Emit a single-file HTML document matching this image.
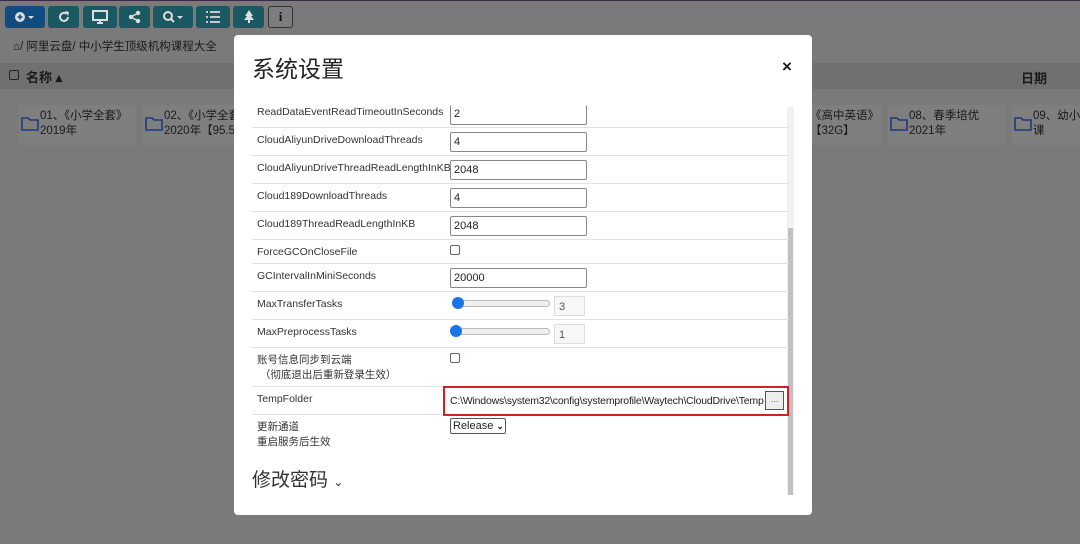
<!DOCTYPE html>
<html><head><meta charset="utf-8">
<style>
*{box-sizing:border-box;margin:0;padding:0}
body{width:1080px;height:544px;overflow:hidden;background:#7a7a7a;font-family:"Liberation Sans","Noto Sans CJK SC",sans-serif;position:relative;color:#1a1a1a}
.a{position:absolute;white-space:nowrap}
.btn{position:absolute;top:6px;height:22px;width:34px;background:#1a5862;border-radius:3px}
.btn svg{position:absolute;left:9px;top:4px}
.tile{position:absolute;top:105px;width:117px;height:40px;background:#7f7f7f;font-size:11.5px;color:#1a1a1a;line-height:15px;padding:4px 0 0 21px;white-space:nowrap;overflow:hidden}
.tile svg{position:absolute;left:2px;top:12px}
.modal{position:absolute;left:234px;top:35px;width:578px;height:480px;background:#fff;border-radius:4px}
.lbl{position:absolute;left:23px;font-size:10.5px;color:#333;white-space:nowrap}
.row{position:absolute;left:18px;width:537px;border-bottom:1px solid #e2e2e2}
.inp{position:absolute;left:216px;width:137px;height:20px;border:1px solid #888;border-radius:2px;font-size:11px;padding:4px 3px;line-height:11px;color:#222}
.cb{position:absolute;left:216px;width:10px;height:10px;border:1px solid #666;border-radius:2px}
.sl{position:absolute;left:218px;width:98px;height:7px;border:1px solid #bbb;border-radius:4px;background:#efefef}
.knob{position:absolute;width:12px;height:12px;border-radius:50%;background:#1a73e8}
.num{position:absolute;left:320px;width:31px;height:20px;border:1px solid #ddd;background:#f7f7f7;font-size:11px;padding:4px;color:#555}
</style></head><body>
<div class="a" style="left:0;top:0;width:1080px;height:1px;background:#3a2a4a"></div>
<div class="btn" style="left:5px;width:40px;background:#114c80"><svg width="22" height="14"><circle cx="6" cy="7" r="5" fill="#ddd"/><path d="M3.5 7h5M6 4.5v5" stroke="#114c80" stroke-width="1.6"/><path d="M14 6l3 3 3-3z" fill="#ddd"/></svg></div>
<div class="btn" style="left:48px;width:31px"><svg width="14" height="14"><path d="M11 7a4 4 0 1 1-1.5-3.2" stroke="#ddd" stroke-width="2" fill="none"/><path d="M8 1l4 1-1 4z" fill="#ddd"/></svg></div>
<div class="btn" style="left:83px"><svg width="16" height="14"><rect x="1" y="1" width="14" height="9" fill="none" stroke="#ddd" stroke-width="2"/><path d="M5 13h6M8 10v3" stroke="#ddd" stroke-width="2"/></svg></div>
<div class="btn" style="left:119px;width:31px"><svg width="14" height="14"><circle cx="10" cy="3" r="2.2" fill="#ddd"/><circle cx="3" cy="7" r="2.2" fill="#ddd"/><circle cx="10" cy="11" r="2.2" fill="#ddd"/><path d="M10 3L3 7l7 4" stroke="#ddd" stroke-width="1.4" fill="none"/></svg></div>
<div class="btn" style="left:153px;width:40px"><svg width="24" height="14"><circle cx="6" cy="6" r="4" fill="none" stroke="#ddd" stroke-width="2"/><path d="M9 9l3 3" stroke="#ddd" stroke-width="2"/><path d="M15 6l3 3 3-3z" fill="#ddd"/></svg></div>
<div class="btn" style="left:196px"><svg width="16" height="14"><path d="M1 2h2M1 7h2M1 12h2M5 2h10M5 7h10M5 12h10" stroke="#ddd" stroke-width="1.8"/></svg></div>
<div class="btn" style="left:233px;width:31px"><svg width="14" height="14"><path d="M7 0L11 6H9L12 10H8v3H6v-3H2L5 6H3z" fill="#ddd"/></svg></div>
<div class="a" style="left:268px;top:6px;width:25px;height:22px;border:1px solid #333;border-radius:3px;background:#7d7d7d;font:bold 13px 'Liberation Serif',serif;text-align:center;line-height:20px;color:#111">i</div>
<div class="a" style="left:13px;top:38px;font-size:11.5px;color:#1a1a1a"><b>&#8962;</b>/ 阿里云盘/ 中小学生顶级机构课程大全</div>
<div class="a" style="left:0;top:63px;width:1080px;height:26px;background:#707070"></div>
<div class="a" style="left:9px;top:70px;width:10px;height:10px;border:1px solid #222;border-radius:2px"></div>
<div class="a" style="left:26px;top:67px;font-size:13px;font-weight:bold">名称 ▴</div>
<div class="a" style="left:1021px;top:68px;font-size:13px;font-weight:bold">日期</div>
<div class="tile" style="left:19px"><svg width="18" height="14"><path d="M1 1h6l2 2h8v10H1z" fill="none" stroke="#1c3a7a" stroke-width="1.6"/></svg>01、《小学全套》<br>2019年</div>
<div class="tile" style="left:143px"><svg width="18" height="14"><path d="M1 1h6l2 2h8v10H1z" fill="none" stroke="#1c3a7a" stroke-width="1.6"/></svg>02、《小学全套<br>2020年【95.5G</div>
<div class="tile" style="left:764px;padding-left:46px">《高中英语》<br>【32G】</div>
<div class="tile" style="left:888px"><svg width="18" height="14"><path d="M1 1h6l2 2h8v10H1z" fill="none" stroke="#1c3a7a" stroke-width="1.6"/></svg>08、春季培优<br>2021年</div>
<div class="tile" style="left:1012px"><svg width="18" height="14"><path d="M1 1h6l2 2h8v10H1z" fill="none" stroke="#1c3a7a" stroke-width="1.6"/></svg>09、幼小衔<br>课</div>

<div class="modal">
<div class="a" style="left:18px;top:15px;font-size:23px;color:#222">系统设置</div>
<div class="a" style="left:548px;top:22px;font-size:17px;font-weight:bold">×</div>
<div class="a" style="left:553px;top:72px;width:7px;height:388px;background:#f1f1f1"></div>
<div class="a" style="left:554px;top:193px;width:5px;height:267px;background:#c1c1c1"></div>

<div class="row" style="top:72px;height:21px"></div>
<div class="lbl" style="top:71px">ReadDataEventReadTimeoutInSeconds</div>
<div class="inp" style="top:70px;border-top:none">2</div>
<div class="row" style="top:93px;height:28px"></div>
<div class="lbl" style="top:99px">CloudAliyunDriveDownloadThreads</div>
<div class="inp" style="top:97px">4</div>
<div class="row" style="top:121px;height:28px"></div>
<div class="lbl" style="top:127px">CloudAliyunDriveThreadReadLengthInKB</div>
<div class="inp" style="top:125px">2048</div>
<div class="row" style="top:149px;height:28px"></div>
<div class="lbl" style="top:155px">Cloud189DownloadThreads</div>
<div class="inp" style="top:153px">4</div>
<div class="row" style="top:177px;height:28px"></div>
<div class="lbl" style="top:183px">Cloud189ThreadReadLengthInKB</div>
<div class="inp" style="top:181px">2048</div>
<div class="row" style="top:205px;height:24px"></div>
<div class="lbl" style="top:211px">ForceGCOnCloseFile</div>
<div class="cb" style="top:210px"></div>
<div class="row" style="top:229px;height:28px"></div>
<div class="lbl" style="top:235px">GCIntervalInMiniSeconds</div>
<div class="inp" style="top:233px">20000</div>
<div class="row" style="top:257px;height:28px"></div>
<div class="lbl" style="top:263px">MaxTransferTasks</div>
<div class="sl" style="top:265px"></div><div class="knob" style="left:218px;top:262px"></div>
<div class="num" style="top:261px">3</div>
<div class="row" style="top:285px;height:28px"></div>
<div class="lbl" style="top:291px">MaxPreprocessTasks</div>
<div class="sl" style="top:293px"></div><div class="knob" style="left:216px;top:290px"></div>
<div class="num" style="top:289px">1</div>
<div class="row" style="top:313px;height:39px"></div>
<div class="lbl" style="top:318px;line-height:15px">账号信息同步到云端<br>&nbsp;（彻底退出后重新登录生效）</div>
<div class="cb" style="top:318px"></div>
<div class="row" style="top:352px;height:28px"></div>
<div class="lbl" style="top:358px">TempFolder</div>
<div class="a" style="left:209px;top:351px;width:346px;height:30px;border:2px solid #d0202a"></div>
<div class="a" style="left:216px;top:360px;font-size:10.5px;color:#222;letter-spacing:-0.2px">C:\Windows\system32\config\systemprofile\Waytech\CloudDrive\Temp</div>
<div class="a" style="left:531px;top:356px;width:19px;height:19px;border:1px solid #555;background:#eee;font-size:9px;text-align:center;line-height:14px;color:#666">...</div>
<div class="lbl" style="top:385px;line-height:15px">更新通道<br>重启服务后生效</div>
<div class="a" style="left:216px;top:383px;width:56px;height:16px;border:1px solid #555;border-radius:2px;font-size:11px;padding:1px 2px;color:#222;line-height:12px">Release <span style="font-size:9px;font-weight:bold">&#8964;</span></div>
<div class="a" style="left:18px;top:430px;font-size:19px;color:#333">修改密码 <span style="font-size:12px">⌄</span></div>
</div>
</body></html>
